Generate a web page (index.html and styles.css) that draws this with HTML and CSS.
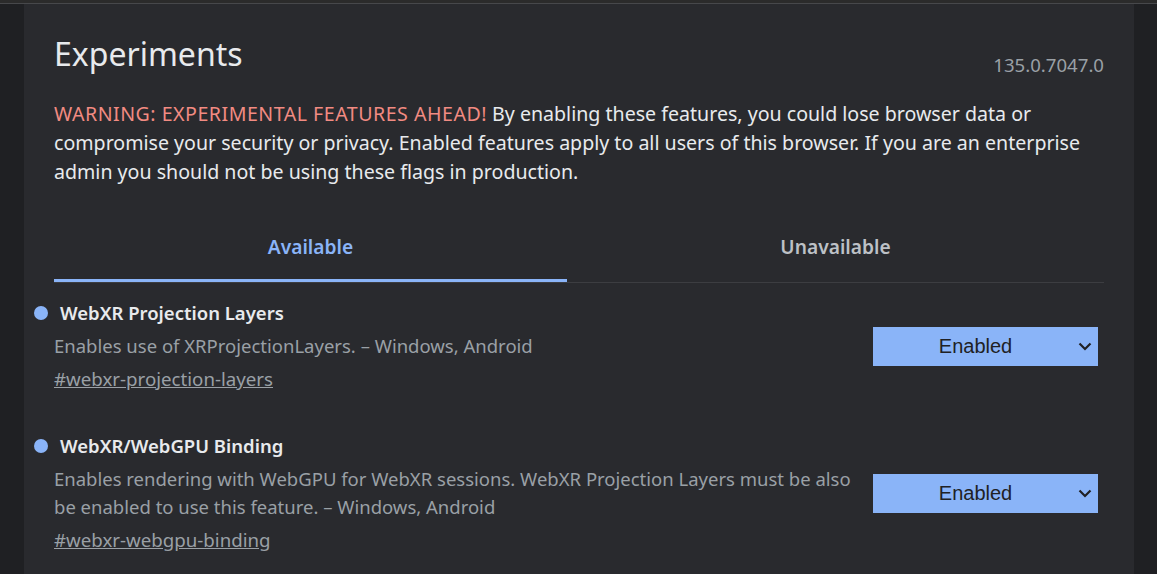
FILE: index.html
```html
<!DOCTYPE html>
<html>
<head>
<meta charset="utf-8">
<link rel="stylesheet" href="styles.css">
</head>
<body>
<div class="topline"></div>
<div class="layout">
  <div class="gutter"></div>
  <main class="panel">
    <div class="header">
      <h1 class="title">Experiments</h1>
      <span class="version">135.0.7047.0</span>
    </div>
    <p class="warning"><span class="warn-strong">WARNING: EXPERIMENTAL FEATURES AHEAD!</span> By enabling these features, you could lose browser data or compromise your security or privacy. Enabled features apply to all users of this browser. If you are an enterprise admin you should not be using these flags in production.</p>
    <div class="tabs">
      <div class="tab tab-active">Available</div>
      <div class="tab tab-other">Unavailable</div>
    </div>
    <div class="flag">
      <div class="flag-text">
        <h2 class="flag-name"><span class="dot"></span>WebXR Projection Layers</h2>
        <p class="flag-desc">Enables use of XRProjectionLayers. – Windows, Android</p>
        <a class="flag-link" href="#">#webxr-projection-layers</a>
      </div>
      <div class="select">
        <span class="select-label">Enabled</span>
        <svg class="chev" width="14" height="9" viewBox="0 0 14 9"><path d="M1.5 1.5 L7 7 L12.5 1.5" fill="none" stroke="#202124" stroke-width="2.2"/></svg>
      </div>
    </div>
    <div class="flag flag-next">
      <div class="flag-text">
        <h2 class="flag-name"><span class="dot"></span>WebXR/WebGPU Binding</h2>
        <p class="flag-desc">Enables rendering with WebGPU for WebXR sessions. WebXR Projection Layers must be also be enabled to use this feature. – Windows, Android</p>
        <a class="flag-link" href="#">#webxr-webgpu-binding</a>
      </div>
      <div class="select">
        <span class="select-label">Enabled</span>
        <svg class="chev" width="14" height="9" viewBox="0 0 14 9"><path d="M1.5 1.5 L7 7 L12.5 1.5" fill="none" stroke="#202124" stroke-width="2.2"/></svg>
      </div>
    </div>
  </main>
  <div class="gutter-right"></div>
</div>
</body>
</html>
```
FILE: styles.css
```css
html, body {
  margin: 0;
  padding: 0;
  background: #1f2023;
  height: 100%;
  overflow: hidden;
}
body {
  font-family: "Noto Sans", "Open Sans", sans-serif;
  color: #e8eaed;
}
.topline {
  height: 3px;
  background: #2b2b2b;
  border-bottom: 1px solid #47484b;
}
.layout {
  display: flex;
  height: 570px;
}
.gutter {
  width: 24px;
  flex: none;
}
.panel {
  width: 1050px;
  flex: none;
  background: #292a2e;
  padding: 0 30px;
}
.gutter-right {
  flex: 1;
}
.header {
  display: flex;
  justify-content: space-between;
  align-items: flex-start;
  padding-top: 30px;
}
.title {
  margin: 0;
  font-size: 32px;
  font-weight: 400;
  line-height: 40px;
  color: #e8eaed;
}
.version {
  font-size: 18.6px;
  color: #9aa0a6;
  margin-top: 18px;
}
.warning {
  margin: 22px 0 0;
  font-size: 19.6px;
  line-height: 29px;
  color: #e8eaed;
}
.warn-strong {
  color: #f28b82;
  letter-spacing: 0.5px;
}
.tabs {
  display: flex;
  margin-top: 13px;
  border-bottom: 1px solid #3c3d41;
}
.tab {
  text-align: center;
  font-size: 19.2px;
  font-weight: 600;
  height: 83px;
  padding-top: 34px;
  line-height: 28px;
  box-sizing: border-box;
}
.tab-active {
  width: 513px;
  color: #8ab4f8;
  border-bottom: 3px solid #8ab4f8;
  border-radius: 2px 2px 0 0;
}
.tab-other {
  flex: 1;
  color: #bdc1c6;
}
.flag {
  display: flex;
  justify-content: space-between;
  align-items: center;
  margin-top: 17px;
}
.flag-next {
  margin-top: 40px;
}
.flag-text {
  width: 800px;
}
.flag-name {
  position: relative;
  margin: 0 0 0 6px;
  font-size: 18.5px;
  font-weight: 600;
  line-height: 26px;
  color: #e8eaed;
}
.dot {
  position: absolute;
  left: -26px;
  top: 6px;
  width: 14px;
  height: 14px;
  border-radius: 50%;
  background: #8ab4f8;
}
.flag-desc {
  margin: 6px 0 0;
  font-size: 18.5px;
  line-height: 28px;
  color: #9aa0a6;
}
.flag-link {
  display: block;
  width: max-content;
  margin-top: 5px;
  font-size: 18.7px;
  line-height: 28px;
  color: #9aa0a6;
  text-decoration: underline;
}
.select {
  width: 225px;
  height: 39px;
  margin-right: 6px;
  box-sizing: border-box;
  padding-right: 20px;
  background: #8ab4f8;
  display: flex;
  align-items: center;
  justify-content: center;
  position: relative;
  font-family: "Liberation Sans", Arial, sans-serif;
  font-size: 20px;
  color: #202124;
}
.chev {
  position: absolute;
  right: 6px;
  top: 15px;
}
```
